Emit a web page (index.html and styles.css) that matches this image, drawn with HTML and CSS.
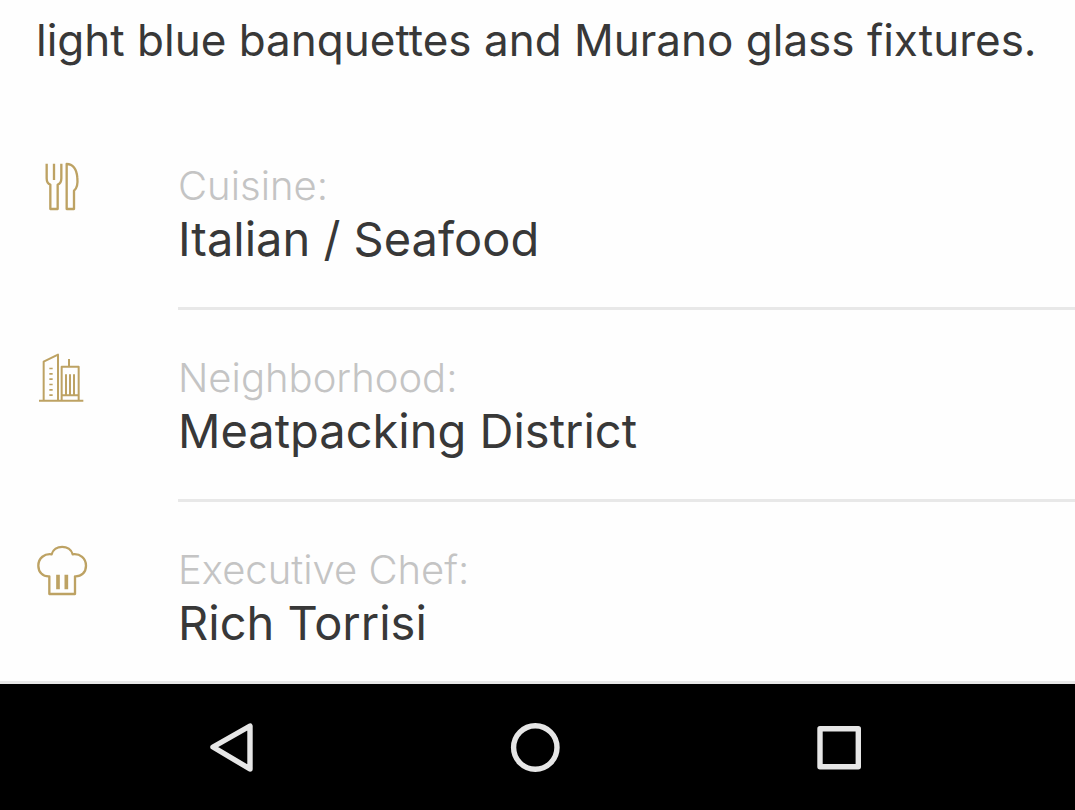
FILE: index.html
```html
<!DOCTYPE html>
<html lang="en">
<head>
<meta charset="utf-8">
<meta name="viewport" content="width=device-width, initial-scale=1">
<title>Restaurant details</title>
<link rel="stylesheet" href="styles.css">
</head>
<body class="screen">
<main class="details">
  <p class="description">light blue banquettes and Murano glass fixtures.</p>
  <dl class="facts">
    <div class="fact">
      <svg class="fact-icon" viewBox="18 18 156 156" aria-hidden="true">
        <path d="M50 26V70Q50 86 61 89V162H83V89Q94 86 94 70V26M72 26V75"/>
        <path d="M110 27V162H132V107Q145 98 142 68C140 42 128 27 110 27Z"/>
      </svg>
      <div class="fact-body">
        <dt class="label">Cuisine:</dt>
        <dd class="value">Italian / Seafood</dd>
      </div>
    </div>
    <div class="fact">
      <svg class="fact-icon fine" viewBox="18 24 156 156" aria-hidden="true">
        <path d="M27 167H160M41 167V50L84 29V167M95 167V65H146V167M95 151H146M117 42V65M108 88V150M120 88V150M132 88V150"/>
        <path d="M63 68V153" stroke-width="10" stroke-dasharray="5 11"/>
      </svg>
      <div class="fact-body">
        <dt class="label">Neighborhood:</dt>
        <dd class="value">Meatpacking District</dd>
      </div>
    </div>
    <div class="fact">
      <svg class="fact-icon" viewBox="18 24 156 156" aria-hidden="true">
        <path d="M58 171V118C38 119 25 105 25 86C25 63 44 49 65 52C72 22 121 22 128 52C150 49 168 64 168 86C168 106 154 119 135 118V171Z"/>
        <path d="M84 113V157M109 113V157" stroke-width="11"/>
      </svg>
      <div class="fact-body">
        <dt class="label">Executive Chef:</dt>
        <dd class="value">Rich Torrisi</dd>
      </div>
    </div>
  </dl>
</main>
<nav class="system-bar" aria-label="System navigation">
  <button class="key" type="button" aria-label="Back"><svg class="key-icon" viewBox="0 0 52 52"><path d="M8 26L45 5V48Z"/></svg></button>
  <button class="key" type="button" aria-label="Home"><svg class="key-icon" viewBox="0 0 52 52"><circle cx="26.3" cy="26.5" r="21.7"/></svg></button>
  <button class="key" type="button" aria-label="Recent apps"><svg class="key-icon" viewBox="0 0 52 52"><rect x="7" y="7.7" width="38.3" height="38"/></svg></button>
</nav>
</body>
</html>
```
FILE: styles.css
```css
* {
  box-sizing: border-box;
}

.screen {
  display: flex;
  flex-direction: column;
  min-height: 100vh;
  margin: 0;
  background: #fefefe;
  color: #383838;
  font-family: Inter, "Open Sans", sans-serif;
}

.details {
  flex: 1;
}

.description {
  margin: 0;
  padding: 10px 36px 48px;
  font-size: 44px;
  line-height: 60px;
}

.facts {
  margin: 0;
}

.fact {
  display: flex;
  gap: 90px;
  padding-left: 36px;
}

.fact-icon {
  flex: none;
  width: 52px;
  height: 52px;
  margin-top: 43px;
  fill: none;
  stroke: #bda263;
  stroke-width: 7;
  stroke-linejoin: round;
}

.fine {
  stroke-width: 6;
}

.fact-body {
  flex: 1;
  height: 192px;
  padding-top: 43px;
  border-bottom: 3px solid #e8e8e8;
}

.fact:last-child .fact-body {
  height: 179px;
  border-bottom: 0;
}

.label {
  color: #c4c4c4;
  font-size: 40px;
  font-weight: 300;
  line-height: 50px;
}

.value {
  margin: 0;
  font-size: 47px;
  line-height: 56px;
}

.label,
.value {
  white-space: nowrap;
}

.system-bar {
  display: grid;
  grid-template-columns: repeat(3, 1fr);
  align-items: center;
  height: 129px;
  padding: 0 84px 0 79px;
  border-top: 3px solid #e8e8e8;
  background: #000;
}

.key {
  display: flex;
  justify-content: center;
  padding: 0;
  border: 0;
  background: none;
}

.key-icon {
  width: 52px;
  height: 52px;
  fill: none;
  stroke: #e6e6e6;
  stroke-width: 5.4;
  stroke-linejoin: round;
}
```
